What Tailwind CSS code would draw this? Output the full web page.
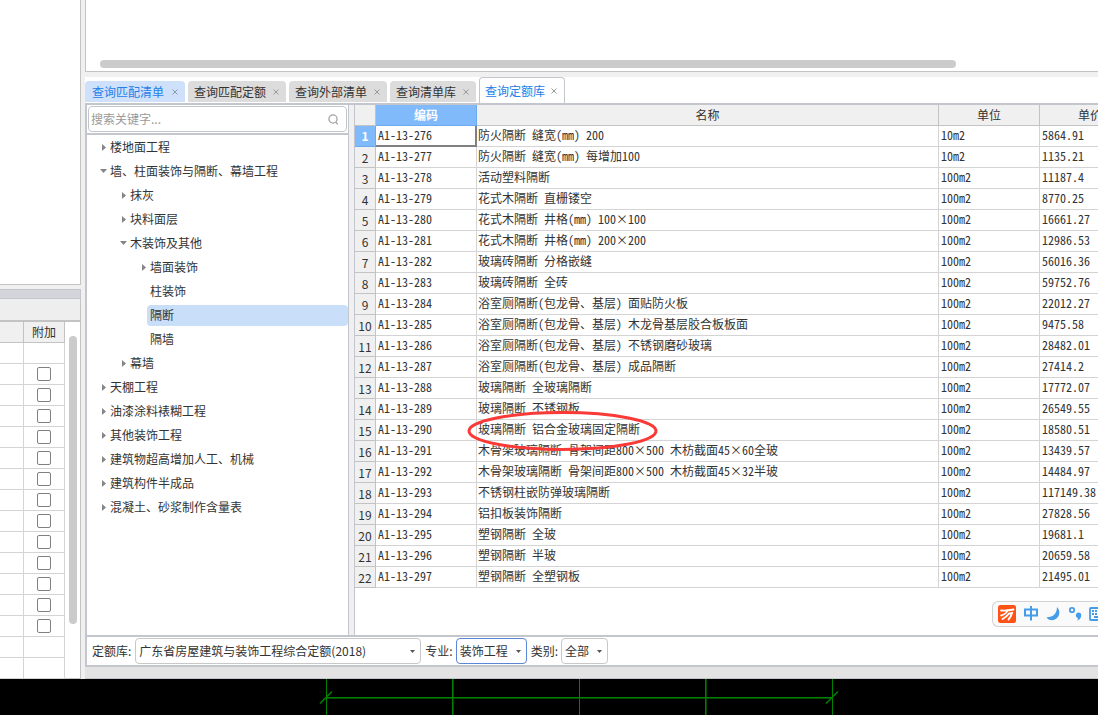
<!DOCTYPE html>
<html lang="zh-CN">
<head>
<meta charset="utf-8">
<meta name="viewport" content="width=device-width, initial-scale=1">
<title>查询定额库</title>
<script src="https://cdn.jsdelivr.net/npm/@tailwindcss/browser@4"></script>
</head>
<body class="flex min-h-screen flex-col overflow-hidden bg-black font-['Noto_Sans_CJK_SC',sans-serif] text-[12px] leading-5 text-[#333333]">

<div class="flex bg-[#f0f0f0]">

  <!-- left column -->
  <aside class="mr-1 flex w-[81px] shrink-0 flex-col">
    <div class="flex-1 border-r border-b border-[#c3c3c3] bg-white"></div>
    <div class="mt-1 h-[10px] border-t border-r border-b border-[#c4c6cc] bg-[#d3d5db]"></div>
    <div class="h-[21px] border-r border-[#c3c3c3] bg-[#eeeeee]"></div>
    <div class="flex border-t-2 border-r border-[#c3c3c3] bg-white">
      <table class="w-[65px] table-fixed border-separate border-spacing-0">
        <colgroup><col class="w-6"><col></colgroup>
        <thead>
          <tr class="h-[21px]">
            <th class="border-r border-b border-[#c3c3c3] bg-[#f0f0f0] p-0"></th>
            <th class="border-r border-b border-[#c3c3c3] bg-[#f0f0f0] p-0 font-normal">附加</th>
          </tr>
        </thead>
        <tbody id="extra"></tbody>
      </table>
      <div class="flex flex-1 justify-center border-b border-[#c3c3c3] pt-[14px]">
        <div class="h-[288px] w-2 rounded-full bg-[#cbcbcb]"></div>
      </div>
    </div>
  </aside>

  <!-- right column -->
  <main class="flex min-w-0 flex-1 flex-col">
    <div class="flex h-[72px] items-end border-b border-l border-[#c3c3c3] bg-white pb-[3px] pl-[14px]">
      <div class="mr-[142px] h-2 flex-1 rounded-full bg-[#cbcbcb]"></div>
    </div>

    <!-- tabs -->
    <nav class="mt-[5px] flex h-[26px] items-end gap-[3px] bg-white" id="tabs">
      <button type="button" class="mb-px flex h-[21px] w-[100px] items-center justify-between rounded-t bg-[#cfe0fa] pr-[7px] pl-[7px] text-[#2380e8]">查询匹配清单<svg class="size-[6px] text-[#8c9cb0]" viewBox="0 0 6 6" stroke="currentColor"><path d="M.5 .5l5 5M5.5 .5l-5 5"/></svg></button>
      <button type="button" class="mb-px flex h-[21px] w-[98px] items-center justify-between rounded-t bg-[#dcdcdc] pr-[7px] pl-[6px]">查询匹配定额<svg class="size-[6px] text-[#999999]" viewBox="0 0 6 6" stroke="currentColor"><path d="M.5 .5l5 5M5.5 .5l-5 5"/></svg></button>
      <button type="button" class="mb-px flex h-[21px] w-[98px] items-center justify-between rounded-t bg-[#dcdcdc] pr-[7px] pl-[6px]">查询外部清单<svg class="size-[6px] text-[#999999]" viewBox="0 0 6 6" stroke="currentColor"><path d="M.5 .5l5 5M5.5 .5l-5 5"/></svg></button>
      <button type="button" class="mb-px flex h-[21px] w-[86px] items-center justify-between rounded-t bg-[#dcdcdc] pr-[7px] pl-[6px]">查询清单库<svg class="size-[6px] text-[#999999]" viewBox="0 0 6 6" stroke="currentColor"><path d="M.5 .5l5 5M5.5 .5l-5 5"/></svg></button>
      <button type="button" class="flex h-[26px] w-[86px] items-center justify-between rounded-t border border-b-0 border-[#c3c7cd] bg-white pr-[7px] pl-[5px] text-[#2380e8]">查询定额库<svg class="size-[6px] text-[#999999]" viewBox="0 0 6 6" stroke="currentColor"><path d="M.5 .5l5 5M5.5 .5l-5 5"/></svg></button>
    </nav>

    <div class="flex border-t-2 border-b-2 border-l-2 border-[#c3c7cd]">
      <!-- chapter tree -->
      <section class="flex w-[262px] shrink-0 flex-col border-r border-[#c3c7cd] bg-white">
        <div class="border-b-2 border-[#c3c7cd] px-px pt-px pb-px">
          <label class="flex h-[26px] items-center rounded border border-[#c3c7cd] pr-[7px] pl-0.5">
            <input type="text" aria-label="搜索关键字" placeholder="搜索关键字..." class="min-w-0 flex-1 outline-none placeholder:text-[#999999]">
            <svg class="size-[11px]" viewBox="0 0 11 11" fill="none" stroke="#a3a3a3" stroke-width="1.3"><circle cx="5" cy="5" r="4.1"/><path d="M7.6 8l2.2 2.4"/></svg>
          </label>
        </div>
        <ul id="tree"></ul>
      </section>

      <!-- quota table -->
      <section class="relative ml-[5px] min-w-0 flex-1 overflow-hidden border-l border-[#c3c7cd] bg-white pb-[47px]">
        <table class="w-[calc(100%+42px)] table-fixed border-separate border-spacing-0">
          <colgroup><col class="w-[21px]"><col class="w-[101px]"><col><col class="w-[101px]"><col class="w-[100px]"></colgroup>
          <thead>
            <tr class="h-[21px]">
              <th class="border-r border-b border-[#c3c3c3] bg-[#f0f0f0] p-0"></th>
              <th class="border-r border-b border-[#6ca9ee] bg-[#80bafb] p-0 font-bold text-white">编码</th>
              <th class="border-r border-b border-[#c3c3c3] bg-[#f0f0f0] p-0 font-normal">名称</th>
              <th class="border-r border-b border-[#c3c3c3] bg-[#f0f0f0] p-0 font-normal">单位</th>
              <th class="border-b border-[#c3c3c3] bg-[#f0f0f0] p-0 font-normal">单价</th>
            </tr>
          </thead>
          <tbody id="quota" class="font-['Noto_Sans_Mono_CJK_SC','Noto_Sans_CJK_SC',monospace] leading-[18px] whitespace-nowrap"></tbody>
        </table>

        <!-- input method bar -->
        <div class="absolute right-0 bottom-2 flex h-[26px] w-[106px] items-center overflow-hidden rounded-l-md border border-r-0 border-[#d2d2d2] bg-[#fafafa] pl-[5px]">
          <svg class="h-[18px] w-[101px] shrink-0" viewBox="0 0 101 18" fill="none">
            <rect width="18" height="18" rx="2.5" fill="#ff5216"/>
            <g stroke="#fff" stroke-width="1.9" stroke-linecap="round"><path d="M3 5.500q6 .5 12.500-1"/><path d="M9.500 5.500C8.500 8 6.500 9.500 3.200 10.500"/><path d="M4.500 14q4-2 6.500-5.500l3-.5q-1 4-3.500 6.500"/></g>
            <g stroke="#459ce8" stroke-width="2"><path d="M27 4.500h12v6H27zM33 1v14.500"/></g>
            <path d="M59 2c5 5 1.500 13.200-5 13.200-2.500 0-4.500-1-5.500-3 6.500 .3 10.500-3.700 10.500-10.200z" fill="#459ce8"/>
            <circle cx="74" cy="5" r="2.200" stroke="#459ce8" stroke-width="1.800"/>
            <path d="M80.300 7.500a2.900 2.900 0 0 1 2.900 3.200c-.2 2.600-1.900 4.400-4.600 4.700 1-.7 1.500-1.400 1.500-2.200a2.900 2.900 0 0 1 .2-5.700z" fill="#459ce8"/>
            <g stroke="#459ce8" stroke-width="1.800"><rect x="92" y="3" width="16" height="12" rx="1"/><path d="M94 6h2m1 0h2m1 0h2M94 9h2m1 0h2m1 0h2M96 12h8"/></g>
          </svg>
        </div>
      </section>
    </div>

    <!-- filter bar -->
    <form class="flex h-7 items-center border-l-2 border-[#c3c7cd] bg-white pl-[5px]">
      <label for="lib" class="mr-1">定额库:</label>
      <div class="relative mr-1 w-[286px]">
        <select id="lib" class="block h-[26px] w-full appearance-none rounded border border-[#c8c8c8] bg-white pl-[3px]"><option>广东省房屋建筑与装饰工程综合定额(2018)</option></select>
        <svg class="pointer-events-none absolute top-[12px] right-[6px] h-[3px] w-[5px]" viewBox="0 0 5 3"><path d="M0 0h5L2.500 3z" fill="#555"/></svg>
      </div>
      <label for="major" class="mr-[3px]">专业:</label>
      <div class="relative mr-1 w-[71px]">
        <select id="major" class="block h-[26px] w-full appearance-none rounded border border-[#5b86d6] bg-white pl-[3px]"><option>装饰工程</option></select>
        <svg class="pointer-events-none absolute top-[12px] right-[6px] h-[3px] w-[5px]" viewBox="0 0 5 3"><path d="M0 0h5L2.500 3z" fill="#555"/></svg>
      </div>
      <label for="kind" class="mr-[3px]">类别:</label>
      <div class="relative w-[47px]">
        <select id="kind" class="block h-[26px] w-full appearance-none rounded border border-[#c8c8c8] bg-white pl-[3px]"><option>全部</option></select>
        <svg class="pointer-events-none absolute top-[12px] right-[6px] h-[3px] w-[5px]" viewBox="0 0 5 3"><path d="M0 0h5L2.500 3z" fill="#555"/></svg>
      </div>
    </form>
    <div class="h-[14px] border-t-2 border-b border-[#c3c7cd] bg-[#e3e3e3]"></div>
  </main>
</div>

<!-- drawing canvas -->
<svg class="h-9 w-full shrink-0 bg-black" fill="none" stroke="#008200" stroke-width="1">
  <path d="M453.500 0v36M706.500 0v36M326 19.500h506" stroke="#004a00"/>
  <path d="M326.500 0v36M452.500 0v36M579.500 0v36M705.500 0v36M832.500 0v36M326 18.500h506"/>
  <path d="M320 24.500l12-12M826 24.500l12-12" stroke-width="1.500"/>
</svg>

<script>
const rows = [
  ['276','防火隔断 缝宽(mm) 200','10m2','5864.91'],
  ['277','防火隔断 缝宽(mm) 每增加100','10m2','1135.21'],
  ['278','活动塑料隔断','100m2','11187.4'],
  ['279','花式木隔断 直栅镂空','100m2','8770.25'],
  ['280','花式木隔断 井格(mm) 100×100','100m2','16661.27'],
  ['281','花式木隔断 井格(mm) 200×200','100m2','12986.53'],
  ['282','玻璃砖隔断 分格嵌缝','100m2','56016.36'],
  ['283','玻璃砖隔断 全砖','100m2','59752.76'],
  ['284','浴室厕隔断(包龙骨、基层) 面贴防火板','100m2','22012.27'],
  ['285','浴室厕隔断(包龙骨、基层) 木龙骨基层胶合板板面','100m2','9475.58'],
  ['286','浴室厕隔断(包龙骨、基层) 不锈钢磨砂玻璃','100m2','28482.01'],
  ['287','浴室厕隔断(包龙骨、基层) 成品隔断','100m2','27414.2'],
  ['288','玻璃隔断 全玻璃隔断','100m2','17772.07'],
  ['289','玻璃隔断 不锈钢板','100m2','26549.55'],
  ['290','玻璃隔断 铝合金玻璃固定隔断','100m2','18580.51'],
  ['291','木骨架玻璃隔断 骨架间距800×500 木枋截面45×60全玻','100m2','13439.57'],
  ['292','木骨架玻璃隔断 骨架间距800×500 木枋截面45×32半玻','100m2','14484.97'],
  ['293','不锈钢柱嵌防弹玻璃隔断','100m2','117149.38'],
  ['294','铝扣板装饰隔断','100m2','27828.56'],
  ['295','塑钢隔断 全玻','100m2','19681.1'],
  ['296','塑钢隔断 半玻','100m2','20659.58'],
  ['297','塑钢隔断 全塑钢板','100m2','21495.01'],
];
const ring = '<svg class="pointer-events-none absolute -top-[10px] -left-[10px] z-10 h-[42px] w-[191px]" viewBox="0 0 191 42" fill="none"><ellipse cx="95.500" cy="21" rx="93.500" ry="18.500" stroke="#f93a37" stroke-width="3"/></svg>';
document.getElementById('quota').innerHTML = rows.map(([code, name, unit, price], i) => `
  <tr class="h-[21px]">
    <th scope="row" class="${i === 0
      ? "border-r border-b border-[#6ca9ee] bg-[#80bafb] p-0 font-['Noto_Sans_CJK_SC',sans-serif] font-bold text-white"
      : "border-r border-b border-[#c3c3c3] bg-[#f0f0f0] p-0 pt-px font-['Noto_Sans_CJK_SC',sans-serif] font-normal"}">${i + 1}</th>
    <td class="${i === 0
      ? 'border-r-2 border-b-2 border-[#808080] p-0 pb-px pl-0.5'
      : 'border-r border-b border-[#d4d4d4] p-0 pb-0.5 pl-0.5'}">A1-13-${code}</td>
    <td class="relative border-r border-b border-[#d4d4d4] p-0 pb-0.5 pl-px">${name}${code === '290' ? ring : ''}</td>
    <td class="border-r border-b border-[#d4d4d4] p-0 pb-0.5 pl-0.5">${unit}</td>
    <td class="border-b border-[#d4d4d4] p-0 pb-0.5 pl-0.5">${price}</td>
  </tr>`).join('');

const right = '<svg class="mr-1 h-[7px] w-[5px] shrink-0" viewBox="0 0 5 7"><path d="M1 0l4 3.500L1 7z" fill="#858585"/></svg>';
const down = '<svg class="mr-[3px] h-1 w-[7px] shrink-0" viewBox="0 0 7 4"><path d="M0 0h7L3.500 4z" fill="#858585"/></svg>';
const pad = { closed: ['pl-[14px]', 'pl-[34px]', 'pl-[54px]'], open: ['pl-[13px]', 'pl-[33px]'] };
const tree = [
  [0,'closed','楼地面工程'], [0,'open','墙、柱面装饰与隔断、幕墙工程'], [1,'closed','抹灰'], [1,'closed','块料面层'],
  [1,'open','木装饰及其他'], [2,'closed','墙面装饰'], [2,'leaf','柱装饰'], [2,'picked','隔断'], [2,'leaf','隔墙'],
  [1,'closed','幕墙'], [0,'closed','天棚工程'], [0,'closed','油漆涂料裱糊工程'], [0,'closed','其他装饰工程'],
  [0,'closed','建筑物超高增加人工、机械'], [0,'closed','建筑构件半成品'], [0,'closed','混凝土、砂浆制作含量表'],
];
document.getElementById('tree').innerHTML = tree.map(([level, kind, text]) => {
  if (kind === 'picked') return `<li class="flex h-6 items-center pl-[60px]"><span class="h-[21px] flex-1 rounded bg-[#c9dff9] pl-[3px]">${text}</span></li>`;
  if (kind === 'leaf') return `<li class="flex h-6 items-center pl-[63px]">${text}</li>`;
  return `<li class="flex h-6 items-center ${pad[kind][level]}">${kind === 'open' ? down : right}${text}</li>`;
}).join('');

document.getElementById('extra').innerHTML = Array.from({ length: 16 }, (_, i) => `
  <tr class="h-[21px]">
    <td class="border-r border-b border-[#d4d4d4] p-0"></td>
    <td class="border-r border-b border-[#d4d4d4] p-0">${i > 0 && i < 14
      ? `<input type="checkbox" aria-label="附加 ${i}" class="mx-auto block size-[14px] appearance-none rounded-xs border border-[#808080] bg-white">`
      : ''}</td>
  </tr>`).join('');
</script>
</body>
</html>
